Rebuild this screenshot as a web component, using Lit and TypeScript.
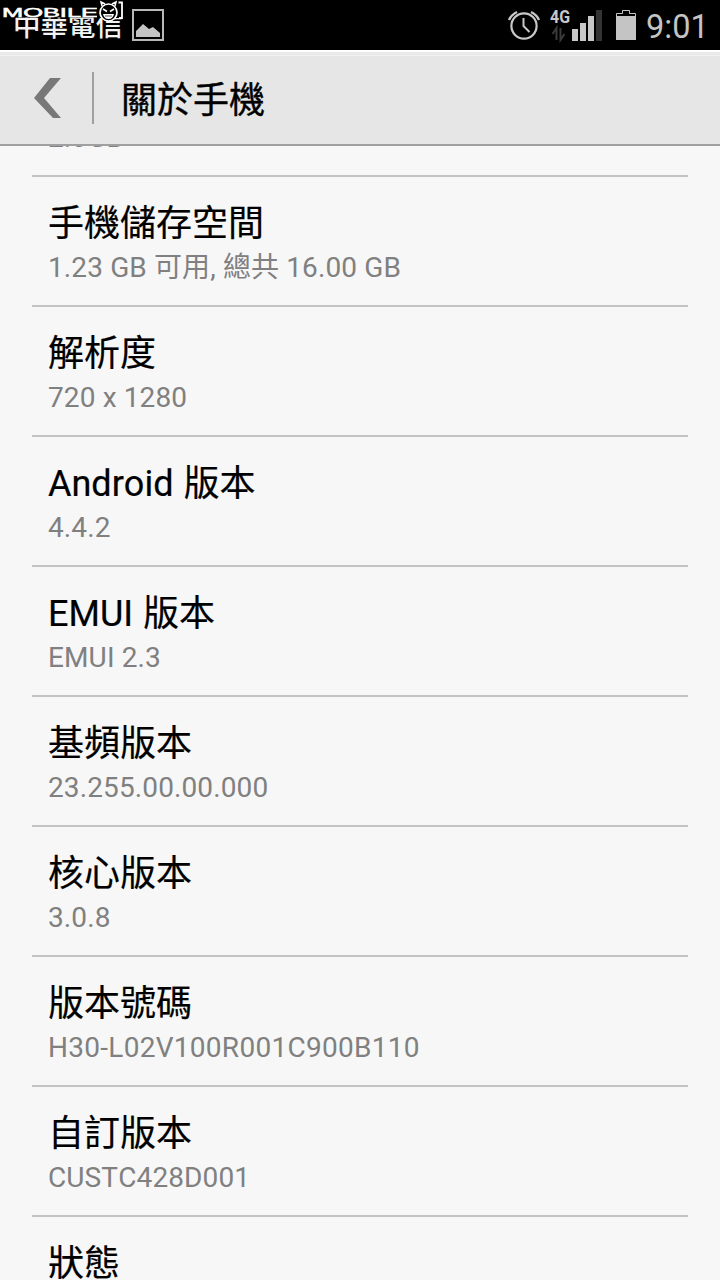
import { LitElement, html, css } from "lit";
import { customElement, property } from "lit/decorators.js";

const ROWS: [string, string][] = [
  ["RAM", "2.0GB"],
  ["手機儲存空間", "1.23 GB 可用, 總共 16.00 GB"],
  ["解析度", "720 x 1280"],
  ["Android 版本", "4.4.2"],
  ["EMUI 版本", "EMUI 2.3"],
  ["基頻版本", "23.255.00.00.000"],
  ["核心版本", "3.0.8"],
  ["版本號碼", "H30-L02V100R001C900B110"],
  ["自訂版本", "CUSTC428D001"],
  ["狀態", ""],
];

@customElement("status-bar")
class StatusBar extends LitElement {
  static styles = css`
    :host { display: flex; position: relative; height: 50px; background: #000; color: #c4c4c4; align-items: center; box-sizing: border-box; overflow: hidden; }
    .carrier { font-size: 27.5px; line-height: 50px; padding: 3px 0 0 13px; width: 132px; box-sizing: border-box; white-space: nowrap; color: #f2f2f2; font-weight: 500; }
    .pic { width: 32px; height: 34px; }
    .spacer { flex: 1; }
    .icons { width: 140px; height: 50px; }
    .time { font-family: Roboto, sans-serif; font-size: 32.5px; line-height: 50px; width: 74px; padding: 3px 0 0 0; box-sizing: border-box; white-space: nowrap; font-kerning: none; }
    .mark { position: absolute; left: 0; top: 0; width: 130px; height: 26px; }
    .net { font: 700 18px Roboto, sans-serif; }
    .brand { font: 400 12.5px "Liberation Sans", sans-serif; }
  `;
  render() {
    return html`
      <span class="carrier">中華電信</span>
      <svg class="pic" viewBox="0 0 32 34"><rect x="1" y="2" width="30" height="30" fill="none" stroke="#b8b8b8" stroke-width="2"/><path d="M4 29V23L11 16L17 21L21 19L28 25V29Z" fill="#c4c4c4"/></svg>
      <span class="spacer"></span>
      <svg class="icons" viewBox="506 0 140 50">
        <g fill="none" stroke="#c8c8c8">
          <circle cx="524" cy="26" r="12.6" stroke-width="2.2"/>
          <path d="M523.5 18V26L529.5 32" stroke-width="2"/>
          <path d="M509 20Q511 15 517 12M531 12Q537 15 539 20" stroke-width="2.4"/>
        </g>
        <text class="net" x="550" y="23" fill="#c8c8c8" textLength="20" lengthAdjust="spacingAndGlyphs">4G</text>
        <path d="M556.500 40V28L552.500 34M560.500 28V40L564.500 34" fill="none" stroke="#3a3a3a" stroke-width="2"/>
        <path d="M572 29h6v12h-6zM580 23h6v18h-6zM588 16h6v25h-6z" fill="#c8c8c8"/>
        <path d="M596 10h6v31h-6z" fill="#333"/>
        <path d="M616.500 16V13.500H622.500V10.500H629.500V13.500H635.500V16" fill="none" stroke="#c4c4c4"/>
        <path d="M616 16h20v24h-20z" fill="#c4c4c4"/>
      </svg>
      <span class="time">9:01</span>
      <svg class="mark" viewBox="0 0 130 26">
        <path d="M2 6H98V17.500H2Z" fill="#000"/>
        <text class="brand" x="2" y="17" fill="#fff" stroke="#fff" stroke-width=".5" textLength="96" lengthAdjust="spacingAndGlyphs">MOBILE</text>
        <path d="M97 4H123V18H97Z" fill="#000"/>
        <circle cx="108.500" cy="12.500" r="8.500" fill="#000" stroke="#fff" stroke-width="1.700"/>
        <path d="M102 6L101 2L105 4M112 4L116 2L115 6M103 9L107 11.500M114 9L110 11.500" fill="none" stroke="#fff" stroke-width="1.500"/>
        <path d="M103 14H114Q113 19 108.500 19Q104 19 103 14Z" fill="#fff"/>
        <path d="M105 16H112" stroke="#000" stroke-width=".7"/>
        <path d="M118.500 2.500H122V18H119" fill="none" stroke="#fff" stroke-width="1.800"/>
      </svg>`;
  }
}

@customElement("title-bar")
class TitleBar extends LitElement {
  static styles = css`
    :host { display: flex; height: 96px; box-sizing: border-box; align-items: center; background: linear-gradient(#fff 0 2px, #e9e9e9 2px 5px, #f1f1f1 5px 6px, #e6e6e6 6px); border-bottom: 2px solid #a0a0a0; padding: 2px 0 0 33px; }
    .back { width: 29px; height: 42px; }
    .rule { width: 2px; height: 52px; margin: 0 27px 0 30px; background: #a0a0a0; }
    .title { font-size: 36px; line-height: 52px; color: #000; padding-top: 6px; -webkit-text-stroke: 0.4px #000; }
  `;
  render() {
    return html`
      <svg class="back" viewBox="0 0 29 42"><path d="M17 1H28L11 21L28 41H20L1 21Z" fill="#787878"/></svg>
      <span class="rule"></span>
      <span class="title">關於手機</span>`;
  }
}

@customElement("info-row")
class InfoRow extends LitElement {
  static styles = css`
    :host { display: block; height: 130px; box-sizing: border-box; border-bottom: 2px solid #c3c3c3; padding: 23px 16px 0; white-space: nowrap; font-kerning: none; }
    .name { font-size: 36px; line-height: 48px; height: 48px; color: #000; word-spacing: 1px; -webkit-text-stroke: 0.2px #000; }
    .value { font-size: 28px; line-height: 40px; height: 40px; color: #808080; letter-spacing: 0.12px; }
    :host([long]) .value { letter-spacing: 0.28px; }
  `;
  @property() name = "";
  @property() value = "";
  render() {
    return html`<div class="name">${this.name}</div><div class="value">${this.value}</div>`;
  }
}

@customElement("app-root")
class AppRoot extends LitElement {
  static styles = css`
    :host { display: flex; flex-direction: column; width: 720px; height: 1280px; overflow: hidden; background: #f7f7f7; font-family: Roboto, "Noto Sans CJK TC", sans-serif; }
    .view { height: 1134px; overflow: hidden; }
    .list { margin: -99px 32px 0; }
  `;
  render() {
    return html`
      <status-bar></status-bar>
      <title-bar></title-bar>
      <div class="view"><div class="list">
        ${ROWS.map(([n, v]) => html`<info-row ?long=${v.length > 20 && !v.includes(" ")} .name=${n} .value=${v}></info-row>`)}
      </div></div>`;
  }
}
